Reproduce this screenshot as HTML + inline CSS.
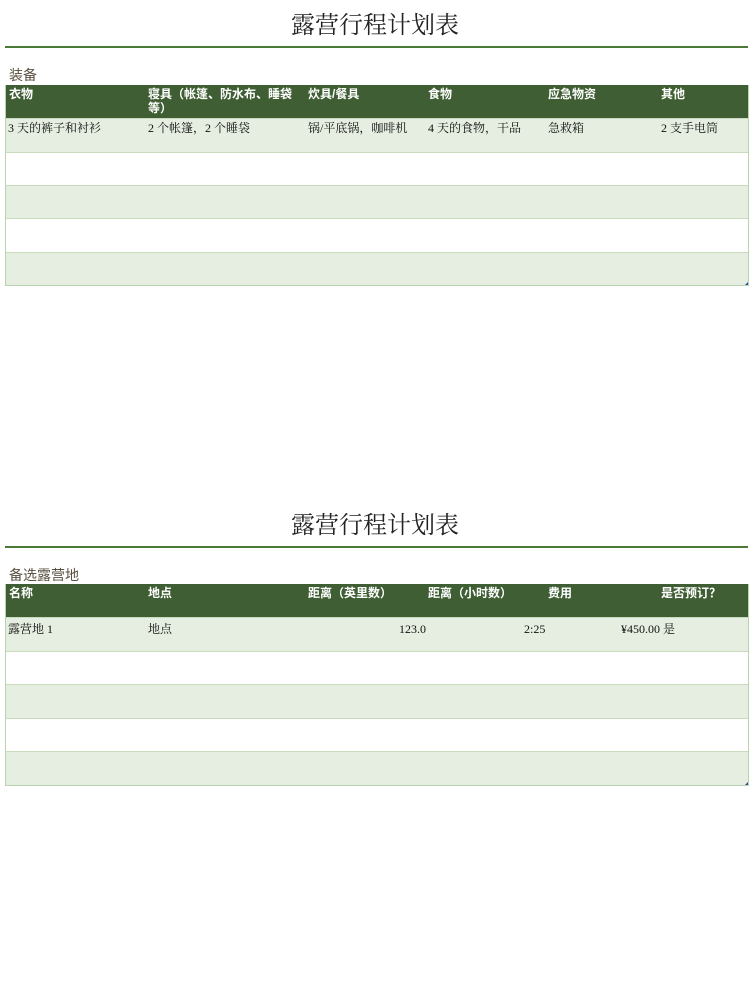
<!DOCTYPE html>
<html><head><meta charset="utf-8"><style>
body{margin:0;width:750px;height:1002px;background:#fff;font-family:"Liberation Serif","Noto Serif CJK SC","Noto Sans CJK SC",serif;position:relative;overflow:hidden}
.t{position:absolute;left:0;width:750px;text-align:center;font-size:24px;color:#222;font-family:"Liberation Serif","Noto Serif CJK SC",serif}
.ln{position:absolute;left:5px;width:743px;height:2px;background:#4b7a37}
.lb{position:absolute;left:9px;font-size:14px;color:#5a5040;font-family:"Liberation Sans","Noto Sans CJK SC",sans-serif}
.tb{position:absolute;left:5px;width:742px;border:1px solid #b9d3b0;border-top:none}
.r{position:relative;height:34px;border-top:1px solid #c6dcbd;box-sizing:border-box;font-size:12px;color:#111}
.r span{position:absolute;top:2px;line-height:14px}
.h{background:#3f5e33;color:#fff;font-weight:bold;border-top:none;height:33px;font-family:"Liberation Sans","Noto Sans CJK SC",sans-serif}
.a{background:#e6eee1}
.rz{position:absolute;right:0;bottom:0;width:0;height:0;border-left:3px solid transparent;border-bottom:3px solid #2a4aa0}
</style></head><body>
<div class="t" style="top:5px">露营行程计划表</div>
<div class="ln" style="top:46px"></div>
<div class="lb" style="top:65px">装备</div>
<div class="tb" style="top:85px">
<div class="r h"><span style="left:3px">衣物</span><span style="left:142px;width:155px">寝具（帐篷、防水布、睡袋等）</span><span style="left:302px">炊具/餐具</span><span style="left:422px">食物</span><span style="left:542px">应急物资</span><span style="left:655px">其他</span></div>
<div class="r a"><span style="left:2px">3 天的裤子和衬衫</span><span style="left:142px">2 个帐篷，2 个睡袋</span><span style="left:302px">锅/平底锅，咖啡机</span><span style="left:422px">4 天的食物，干品</span><span style="left:542px">急救箱</span><span style="left:655px">2 支手电筒</span></div>
<div class="r" style="height:33px"></div><div class="r a" style="height:33px"></div><div class="r"></div><div class="r a" style="height:33px"><i class="rz"></i></div>
</div>
<div class="t" style="top:505px">露营行程计划表</div>
<div class="ln" style="top:546px"></div>
<div class="lb" style="top:565px">备选露营地</div>
<div class="tb" style="top:584px">
<div class="r h"><span style="left:3px">名称</span><span style="left:142px">地点</span><span style="left:302px">距离（英里数）</span><span style="left:422px">距离（小时数）</span><span style="left:542px">费用</span><span style="left:655px">是否预订？</span></div>
<div class="r a"><span style="left:2px;top:4px">露营地 1</span><span style="left:142px;top:4px">地点</span><span style="left:393px;top:4px">123.0</span><span style="left:518px;top:4px">2:25</span><span style="left:615px;top:4px">¥450.00 是</span></div>
<div class="r" style="height:33px"></div><div class="r a"></div><div class="r" style="height:33px"></div><div class="r a"><i class="rz"></i></div>
</div>
</body></html>
